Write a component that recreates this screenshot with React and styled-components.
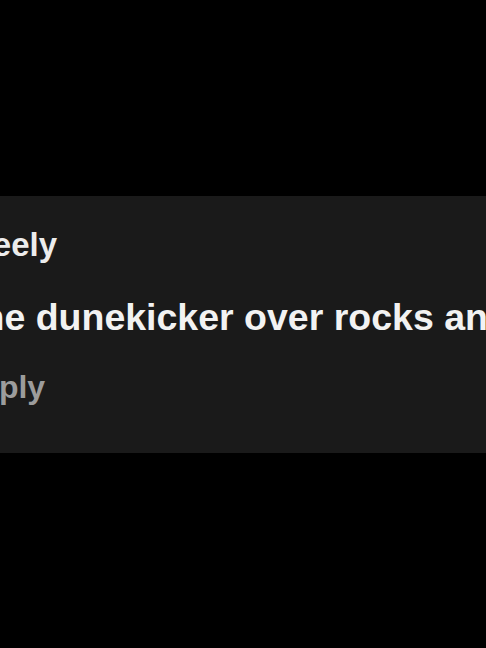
import React from "react";
import styled, { createGlobalStyle } from "styled-components";

const GlobalStyle = createGlobalStyle`
  html, body {
    margin: 0;
    padding: 0;
    background: #000;
  }
`;

// full window, panel sits in the middle
const Page = styled.div`
  width: 486px;
  height: 648px;
  display: flex;
  flex-direction: column;
  justify-content: center;
  overflow: hidden;
  font-family: "Liberation Sans", Arial, sans-serif;
`;

const CommentPanel = styled.div`
  background: #1a1a1a;
  height: 257px;
  box-sizing: border-box;
  padding: 29px 0 0 0;
  overflow: hidden;
`;

// content is wider than the crop, so it starts left of the edge
const CommentBody = styled.div`
  display: flex;
  flex-direction: column;
  margin-left: -31px;
  white-space: nowrap;
`;

const Author = styled.div`
  font-size: 33px;
  line-height: 40px;
  font-weight: 700;
  color: #ececec;
`;

const Text = styled.div`
  margin-top: 30px;
  font-size: 37.5px;
  line-height: 44px;
  font-weight: 700;
  color: #f2f2f2;
`;

const ReplyButton = styled.button`
  align-self: flex-start;
  margin-top: 28px;
  margin-left: -11px;
  padding: 0;
  border: none;
  background: transparent;
  font-family: inherit;
  font-size: 32px;
  line-height: 40px;
  font-weight: 700;
  color: #9c9c9c;
  cursor: pointer;
`;

const App = () => {
  return (
    <Page>
      <GlobalStyle />
      <CommentPanel>
        <CommentBody>
          <Author>Keely</Author>
          <Text>the dunekicker over rocks and sand all weekend</Text>
          <ReplyButton>Reply</ReplyButton>
        </CommentBody>
      </CommentPanel>
    </Page>
  );
};

export default App;
